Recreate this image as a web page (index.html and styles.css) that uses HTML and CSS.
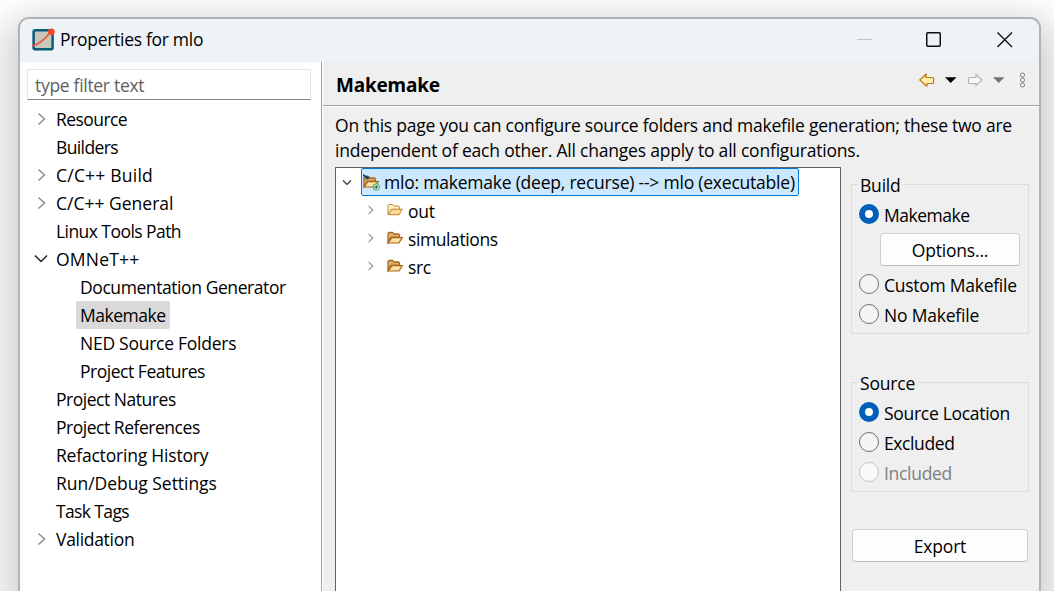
FILE: index.html
```html
<!DOCTYPE html>
<html lang="en">
<head>
<meta charset="utf-8">
<title>Properties for mlo</title>
<link rel="stylesheet" href="styles.css">
</head>
<body>
<svg class="defs" width="0" height="0">
  <defs>
    <symbol id="right" viewBox="0 0 10 14"><path d="M1.5 1.5 7.5 7 1.5 12.5" fill="none" stroke="#8e8e8e" stroke-width="1.5"/></symbol>
    <symbol id="small-right" viewBox="0 0 8 10"><path d="M1.5 .8 5.8 5 1.5 9.2" fill="none" stroke="#929292" stroke-width="1.1"/></symbol>
    <symbol id="folder" viewBox="0 0 16 14"><path d="M1 11.5V2.5L2 1.5H5.5L7 3H11.5L12.5 4V6" fill="#fff0c4" stroke="#c38a38"/><path d="M1.2 11.7 4.5 6.2H15.3L12 11.7Z" fill="#fbdc94" stroke="#bd7f2a"/></symbol>
    <symbol id="source" viewBox="0 0 16 14"><path d="M1 11.5V2.5L2 1.5H5.5L7 3H11.5L12.5 4V6L4 6.5Z" fill="#e0b072" stroke="#a7671f" stroke-width="1.3"/><path d="M1.2 12 4.8 6.6H15.2L12 12Z" fill="#fde2a6" stroke="#a9651a" stroke-width="1.2"/></symbol>
  </defs>
</svg>
<main class="window">
  <header class="titlebar">
    <svg class="app-icon" viewBox="0 0 24 24"><rect x="1.6" y="3.2" width="19" height="19" rx="1.5" fill="#c8c7bc" stroke="#075b7b" stroke-width="2.5"/><path d="M.2 18.8C7 17.5 12 13 17.5 6.5" fill="none" stroke="#f05535" stroke-width="1.8"/><circle cx="19.4" cy="4.8" r="3.3" fill="#f64729"/></svg>
    <h1 class="title"><span class="s-title">Properties for mlo</span></h1>
    <svg class="controls" viewBox="0 0 150 16"><path d="M0 7.5H15" stroke="#bfc4c8"/><rect x="69.75" y=".75" width="13.5" height="13.5" rx="1" fill="none" stroke="#111" stroke-width="1.5"/><path d="M140.5.5 155 15M155 .5 140.5 15" stroke="#111" stroke-width="1.4"/></svg>
  </header>
  <div class="body">
    <nav class="sidebar">
      <div class="filter"><span class="s-filter">type filter text</span></div>
      <ul class="tree">
        <li><svg class="arrow"><use href="#right"/></svg><span class="s-resource">Resource</span></li>
        <li><span class="s-builders">Builders</span></li>
        <li><svg class="arrow"><use href="#right"/></svg><span class="s-build">C/C++ Build</span></li>
        <li><svg class="arrow"><use href="#right"/></svg><span class="s-general">C/C++ General</span></li>
        <li><span class="s-linux">Linux Tools Path</span></li>
        <li><svg class="arrow open" viewBox="0 0 14 10"><path d="M1 1.5 7 7.5 13 1.5" fill="none" stroke="#222" stroke-width="1.5"/></svg><span class="s-omnet">OMNeT++</span></li>
        <li class="child"><span class="s-doc">Documentation Generator</span></li>
        <li class="child"><span class="selected s-make">Makemake</span></li>
        <li class="child"><span class="s-ned">NED Source Folders</span></li>
        <li class="child"><span class="s-features">Project Features</span></li>
        <li><span class="s-natures">Project Natures</span></li>
        <li><span class="s-refs">Project References</span></li>
        <li><span class="s-refactor">Refactoring History</span></li>
        <li><span class="s-run">Run/Debug Settings</span></li>
        <li><span class="s-task">Task Tags</span></li>
        <li><svg class="arrow"><use href="#right"/></svg><span class="s-valid">Validation</span></li>
      </ul>
    </nav>
    <section class="page">
      <header class="page-head">
        <h2 class="page-title">Makemake</h2>
        <svg class="toolbar" viewBox="0 0 108 18"><path d="M.8 9 7 3.2V6.5H13.5Q14.5 6.5 14.5 7.5V11.5Q14.5 12.5 13.5 12.5H8V14.8H7Z" fill="#fff0b2" stroke="#b87914" stroke-width="1.2"/><path d="M26 6.2H37.5L31.7 12Z" fill="#000"/><path d="M63 9 57 3.5V6.5H50.5Q49.5 6.5 49.5 7.5V11.5Q49.5 12.5 50.5 12.5H57V14.5Z" fill="#f7f7f7" stroke="#b4b4b4" stroke-width="1.1"/><path d="M74 6.2H85.5L79.7 12Z" fill="#737376"/><g fill="#fff" stroke="#777"><circle cx="103.5" cy="4" r="2"/><circle cx="103.5" cy="9" r="2"/><circle cx="103.5" cy="14" r="2"/></g></svg>
      </header>
      <p class="intro"><span class="s-intro1">On this page you can configure source folders and makefile generation; these two are</span><br><span class="s-intro2">independent of each other. All changes apply to all configurations.</span></p>
      <div class="content">
        <div class="folders">
          <div class="root"><svg class="root-arrow" viewBox="0 0 10 8"><path d="M1 1.5 5 5.5 9 1.5" fill="none" stroke="#333" stroke-width="1.2"/></svg><div class="root-item"><svg class="root-icon" viewBox="0 0 17 17"><use href="#source" y="1" width="16" height="14"/><path d="M0 0 1.5 1 4.5 2.5V1L6.5 5 2 5.5 3 4 0 2Z" fill="#173d71"/><circle cx="13.3" cy="13" r="3.2" fill="#e5f5df" stroke="#4c965e"/><path d="M13.3 11.2V14.8M11.5 13H15.1" stroke="#278047" stroke-width="1.4"/></svg><span class="s-root">mlo: makemake (deep, recurse) --&gt; mlo (executable)</span></div></div>
          <div class="folder-row"><svg class="small-arrow"><use href="#small-right"/></svg><svg class="folder"><use href="#folder"/></svg><span class="s-out">out</span></div>
          <div class="folder-row"><svg class="small-arrow"><use href="#small-right"/></svg><svg class="folder"><use href="#source"/></svg><span class="s-sim">simulations</span></div>
          <div class="folder-row"><svg class="small-arrow"><use href="#small-right"/></svg><svg class="folder"><use href="#source"/></svg><span class="s-src">src</span></div>
        </div>
        <aside class="options">
          <fieldset class="group build">
            <legend><span class="s-buildgroup">Build</span></legend>
            <label class="choice"><i class="radio checked"></i><span class="s-make">Makemake</span></label>
            <button class="button small"><span class="s-options">Options...</span></button>
            <label class="choice"><i class="radio"></i><span class="s-custom">Custom Makefile</span></label>
            <label class="choice"><i class="radio"></i><span class="s-no">No Makefile</span></label>
          </fieldset>
          <fieldset class="group source">
            <legend><span class="s-source">Source</span></legend>
            <label class="choice"><i class="radio checked"></i><span class="s-location">Source Location</span></label>
            <label class="choice"><i class="radio"></i><span class="s-excluded">Excluded</span></label>
            <label class="choice disabled"><i class="radio"></i><span class="s-included">Included</span></label>
          </fieldset>
          <button class="button export"><span class="s-export">Export</span></button>
        </aside>
      </div>
    </section>
  </div>
</main>
</body>
</html>
```
FILE: styles.css
```css
* { box-sizing: border-box; }
body { margin: 0; height: 591px; overflow: hidden; padding: 17px 13px 0 18px; background: #fff; font: 17.5px/28px "Open Sans", "Noto Sans", sans-serif; letter-spacing: -.2px; color: #000; }
.defs { display: none; }
h1, h2, p, ul { margin: 0; padding: 0; font-weight: 400; }
span { white-space: nowrap; }
.window { height: 574px; border: 2px solid #b3b3b3; border-bottom: 0; border-radius: 11px 11px 0 0; overflow: hidden; background: #efefef; box-shadow: 0 14px 36px 13px rgba(0,0,0,.19); }
.titlebar { height: 43px; background: #eef3f8; display: flex; align-items: center; padding: 0 0 2px 12px; }
.app-icon { width: 24px; height: 24px; margin-top: -2px; }
.title { font-size: 17.5px; margin: -2px 0 0 4px; flex: 1; }
.controls { width: 150px; height: 16px; margin-right: 32px; overflow: visible; }
.body { display: flex; height: 529px; }
.sidebar { width: 303px; flex: none; background: #fff; border-right: 1px solid #fff; box-shadow: inset -1px 0 #a0a0a0; padding: 7px 0 0 7px; }
.filter { width: 284px; height: 31px; border: 1px solid #e5e5e5; border-bottom-color: #858585; padding: 1px 7px; color: #606060; }
.tree { list-style: none; padding: 5px 0 0 29px; }
.tree li { height: 28px; display: flex; align-items: center; }
.tree .child { padding-left: 24px; }
.arrow { width: 10px; height: 14px; margin-left: -19px; margin-right: 9px; }
.arrow.open { width: 14px; height: 10px; margin-left: -22px; margin-right: 8px; }
.selected { background: #d9d9d9; margin-left: -4px; padding: 0 4px; border-radius: 2px; height: 28px; width: 94px; }
.page { flex: 1; min-width: 0; }
.page-head { height: 45px; display: flex; align-items: center; padding-left: 13px; border-bottom: 1px solid #fff; box-shadow: inset 0 -1px #a0a0a0; }
.page-title { flex: 1; font: bold 19px/28px "Noto Sans", sans-serif; padding-top: 1px; }
.toolbar { width: 108px; height: 18px; margin: -9px 12px 0 0; }
.intro { height: 60px; padding: 6px 0 0 12px; line-height: 25px; }
.content { display: flex; height: 424px; padding-left: 12px; }
.folders { width: 506px; flex: none; height: 424px; background: #fff; border: 1px solid #646464; border-bottom: 0; }
.root { height: 28px; display: flex; }
.root-arrow { width: 10px; height: 8px; margin: 11px 9px 0 6px; }
.root-item { width: 438px; height: 28px; display: flex; align-items: center; background: #cce8ff; border: 1px solid #0078d7; border-radius: 2px; padding-left: 1px; }
.root-icon { width: 17px; height: 17px; flex: none; margin-right: 4px; }
.folder-row { height: 28px; display: flex; align-items: center; padding-left: 31px; }
.small-arrow { width: 8px; height: 10px; margin-right: 12px; }
.folder { width: 16px; height: 14px; margin-right: 5px; }
.folder-row span { padding-top: 1px; }
.options { margin-left: 10px; }
.group { width: 178px; border: 1px solid #dcdcdc; margin: 0; padding: 0 0 0 7px; min-width: 0; }
.group legend { padding: 1px 2px 0; margin-left: -1px; line-height: 24px; height: 24px; }
.build { margin-top: 5px; height: 162px; }
.source { margin-top: 36px; height: 122px; }
.choice { display: flex; align-items: center; height: 30px; }
.group .choice:first-of-type { margin-top: 4px; }
.radio { width: 20px; height: 20px; flex: none; border: 1px solid #707070; border-radius: 50%; background: #f5f5f5; margin: -3px 5px 0 0; }
.radio.checked { background: #fff; border: 6px solid #005fb8; }
.disabled { color: #808080; }
.disabled .radio { border-color: #c5c5c5; background: #f9f9f9; }
.button { display: flex; justify-content: center; align-items: center; height: 33px; border: 1px solid #d0d0d0; border-bottom-color: #bbb; border-radius: 4px; background: #fdfdfd; font: inherit; letter-spacing: inherit; color: #000; padding: 1px 0 0; }
.small { width: 140px; margin: 3px 0 4px 21px; }
.export { width: 176px; margin: 37px 0 0 1px; }

/* label tracking */
.s-title, .s-filter, .s-valid, .s-included, .s-location { letter-spacing: -.3px; }
.s-resource, .s-linux { letter-spacing: -.56px; }
.s-builders, .s-task { letter-spacing: -.62px; }
.s-build, .s-omnet { letter-spacing: .22px; }
.s-general { letter-spacing: 0; }
.s-doc { letter-spacing: -.42px; }
.s-make, .s-natures, .s-refs, .s-features { letter-spacing: -.47px; }
.s-ned, .s-custom { letter-spacing: -.26px; }
.s-run { letter-spacing: -.04px; }
.s-intro1 { letter-spacing: -.235px; }
.s-root { letter-spacing: -.22px; }
.s-sim, .s-excluded, .s-src { letter-spacing: -.4px; }
```
